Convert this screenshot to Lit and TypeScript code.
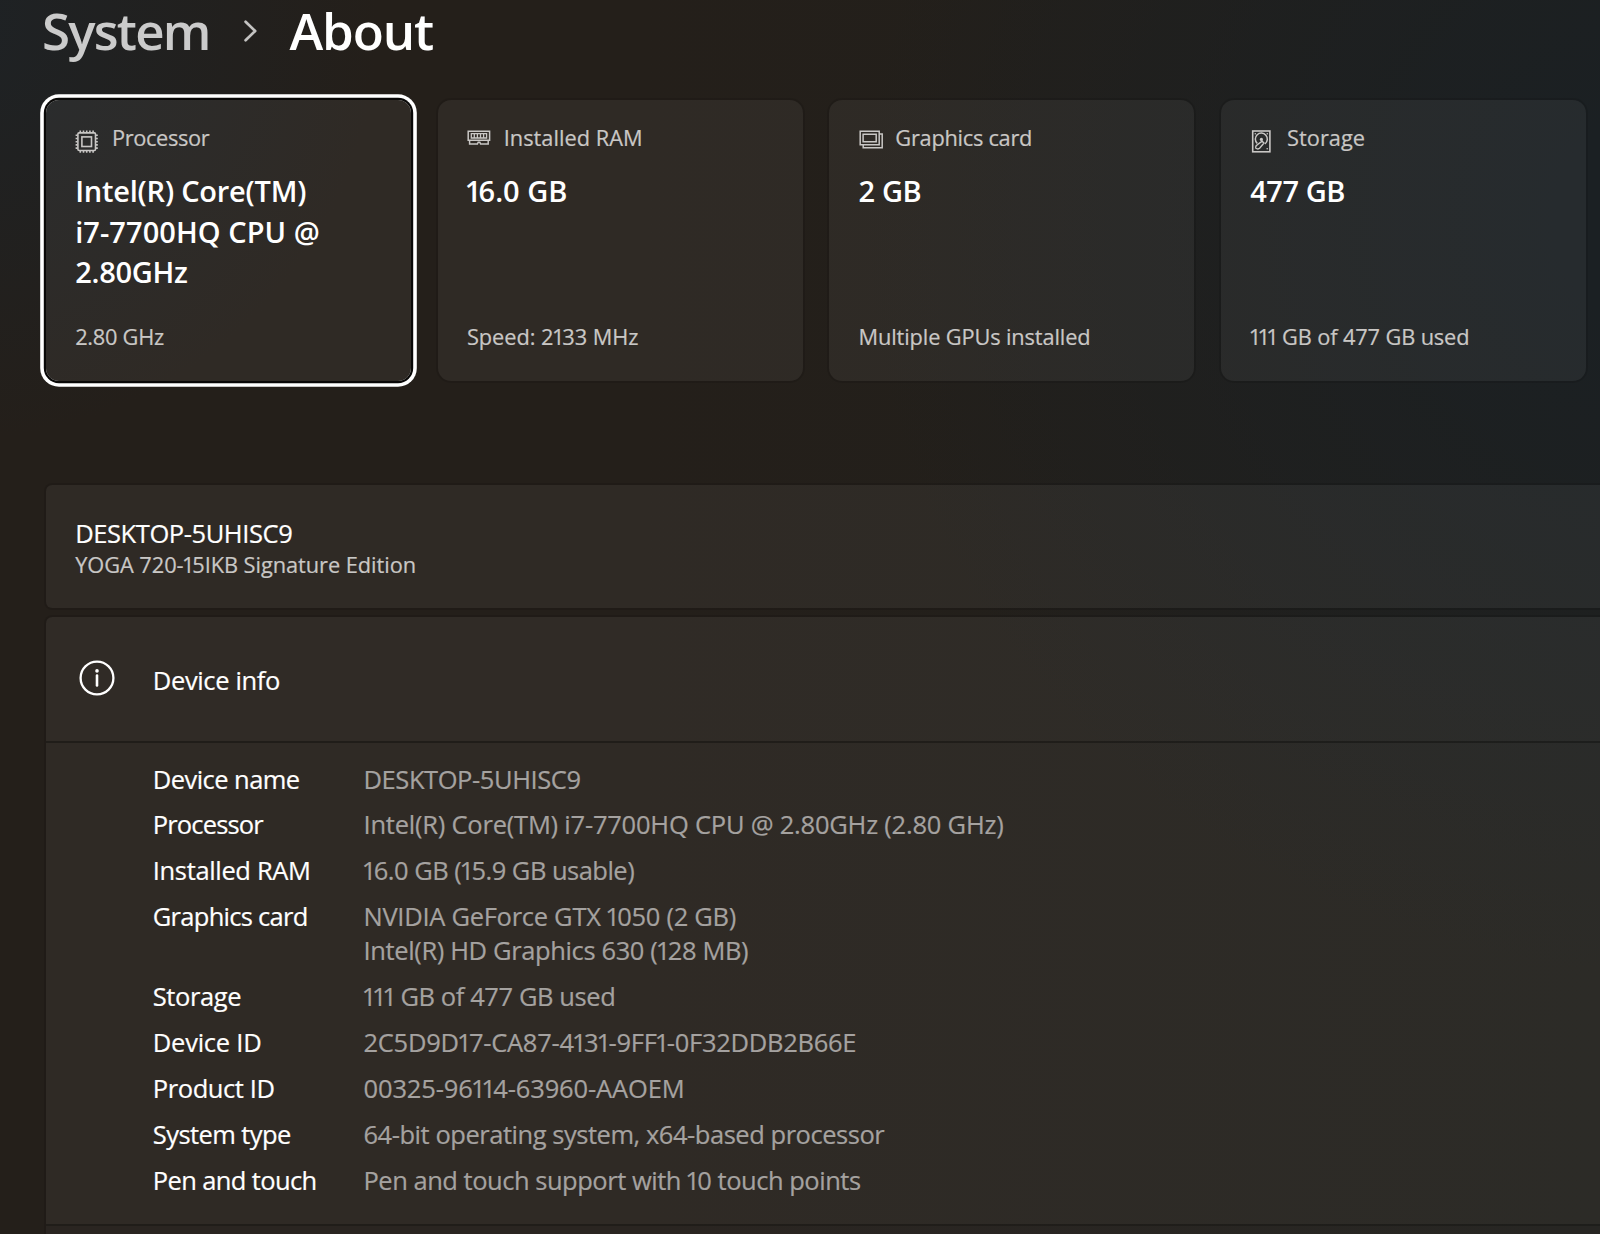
import { LitElement, html, css, svg, type TemplateResult } from "lit";
import { customElement, property } from "lit/decorators.js";
import { classMap } from "lit/directives/class-map.js";

/** A run of text with its own tracking, in px. */
type Run = [text: string, tracking: number];

interface Spec {
  icon: string;
  label: Run;
  value: Run[];
  note: Run;
  focused?: boolean;
}

interface Row {
  label: Run;
  values: Run[];
}

const specs: Spec[] = [
  {
    icon: "cpu",
    label: ["Processor", -0.37],
    value: [
      ["Intel(R) Core(TM)", -0.22],
      ["i7-7700HQ CPU @", 0.06],
      ["2.80GHz", -0.29],
    ],
    note: ["2.80 GHz", -0.28],
    focused: true,
  },
  { icon: "ram", label: ["Installed RAM", 0.02], value: [["16.0 GB", 0]], note: ["Speed: 2133 MHz", -0.05] },
  { icon: "gpu", label: ["Graphics card", -0.28], value: [["2 GB", -0.38]], note: ["Multiple GPUs installed", -0.14] },
  { icon: "disk", label: ["Storage", 0], value: [["477 GB", -0.46]], note: ["111 GB of 477 GB used", -0.14] },
];

const rows: Row[] = [
  { label: ["Device name", -0.55], values: [["DESKTOP-5UHISC9", -0.42]] },
  { label: ["Processor", -0.85], values: [["Intel(R) Core(TM) i7-7700HQ CPU @ 2.80GHz (2.80 GHz)", -0.22]] },
  { label: ["Installed RAM", -0.35], values: [["16.0 GB (15.9 GB usable)", -0.52]] },
  {
    label: ["Graphics card", -0.72],
    values: [
      ["NVIDIA GeForce GTX 1050 (2 GB)", -0.28],
      ["Intel(R) HD Graphics 630 (128 MB)", -0.37],
    ],
  },
  { label: ["Storage", -0.42], values: [["111 GB of 477 GB used", -0.41]] },
  { label: ["Device ID", -0.24], values: [["2C5D9D17-CA87-4131-9FF1-0F32DDB2B66E", -0.27]] },
  { label: ["Product ID", -0.42], values: [["00325-96114-63960-AAOEM", -0.13]] },
  { label: ["System type", -0.58], values: [["64-bit operating system, x64-based processor", -0.46]] },
  { label: ["Pen and touch", -0.62], values: [["Pen and touch support with 10 touch points", -0.48]] },
];

/** Draws a run; the digit one is set narrower than the other figures. */
const run = ([text, tracking]: Run) =>
  html`<span style="letter-spacing:${tracking}px"
    >${text.split(/(1)/).map((part) => (part === "1" ? html`<span class="one">1</span>` : part))}</span
  >`;

const figures = css`
  .one {
    margin-left: -0.07em;
    letter-spacing: -0.1em;
  }
`;

const pins = [5.3, 8.5, 11.7, 14.9, 18.1];

const icons: Record<string, TemplateResult> = {
  cpu: svg`
    <rect x="2.9" y="2.9" width="17.6" height="17.6" rx="1.2" stroke-width="1.6"/>
    <rect x="6.9" y="6.9" width="9.6" height="9.6" stroke-width="1.6"/>
    <path stroke-width="1.6" d="${pins.map((p) => `M${p} .6V2.6M${p} 20.8V22.8M.6 ${p}H2.6M20.8 ${p}H22.8`).join("")}"/>`,
  ram: svg`
    <path stroke-width="1.5" d="M1.2 1.2H22.6V10.2H1.2ZM2.6 10.2V14H10.4L11.2 12.2H12.8L13.6 14H21.2V10.2"/>
    <path stroke-width="1.3" d="M4.3 3.7H19.6V8H4.3ZM7.3 3.7V8M10.4 3.7V8M13.5 3.7V8M16.6 3.7V8"/>`,
  gpu: svg`
    <path stroke-width="1.5" d="M1.2 1.2H20.2V14.8H1.2Z"/>
    <path stroke-width="1.5" d="M4.1 4.2H17.2V11.8H4.1Z"/>
    <path stroke-width="1.5" d="M20.4 4H23.2V17.8H4.2V15"/>`,
  disk: svg`
    <rect x="2.7" y="1" width="17.2" height="20.8" stroke-width="1.6"/>
    <path stroke-width="1.5" d="M7.2 13.4A6 6 0 1 1 15 13.8"/>
    <path stroke-width="1.4" d="M12.2 11.2L14 13L9.6 18.3C8.4 19.4 6.2 18.9 5.7 18C5.4 16.6 6.2 15.3 7.4 14.6Z"/>
    <circle class="dot" cx="11.4" cy="9.4" r="1.6"/>
    <circle class="dot" cx="5.3" cy="3.8" r=".8"/>
    <circle class="dot" cx="17.3" cy="3.8" r=".8"/>
    <circle class="dot" cx="17.2" cy="18.8" r=".8"/>`,
};

@customElement("spec-card")
class SpecCard extends LitElement {
  @property({ attribute: false }) spec!: Spec;

  static styles = [
    figures,
    css`
      :host {
        display: block;
      }
      .card {
        box-sizing: border-box;
        height: 281px;
        padding: 23.7px 20px 28.4px 29.2px;
        border-radius: 13px;
        background: rgba(255, 255, 255, 0.052);
        box-shadow: 0 0 0 2px rgba(0, 0, 0, 0.1);
        display: flex;
        flex-direction: column;
      }
      .focused {
        box-shadow:
          0 0 0 2.2px #090807,
          0 0 0 5.8px #fff;
      }
      .head {
        display: flex;
        gap: 12.8px;
        height: 30px;
        color: #c9c7c5;
      }
      .icon {
        flex: none;
        width: 24px;
        height: 24px;
        margin-top: 6.6px;
        fill: none;
        stroke: currentColor;
        overflow: visible;
      }
      .dot {
        fill: currentColor;
        stroke: none;
      }
      .small {
        font-size: 21.8px;
        line-height: 30px;
        color: #c9c7c5;
        white-space: nowrap;
        -webkit-text-stroke: 0.2px currentColor;
      }
      .value {
        margin-top: 17.9px;
        font-size: 29px;
        font-weight: 600;
        line-height: 40.7px;
        color: #fff;
        white-space: nowrap;
        flex: 1;
      }
    `,
  ];

  render() {
    const s = this.spec;
    return html`<section class=${classMap({ card: true, focused: !!s.focused })}>
      <div class="head">
        <svg class="icon" viewBox="0 0 24 24">${icons[s.icon]}</svg>
        <div class="small">${run(s.label)}</div>
      </div>
      <div class="value">${s.value.map((v) => html`<div>${run(v)}</div>`)}</div>
      <div class="small">${run(s.note)}</div>
    </section>`;
  }
}

@customElement("app-root")
class AppRoot extends LitElement {
  static styles = [
    figures,
    css`
      :host {
        display: flow-root;
        box-sizing: border-box;
        height: 1234px;
        overflow: hidden;
        padding-left: 46px;
        font-family: "Open Sans", "Noto Sans", sans-serif;
        color: #fff;
        background:
          radial-gradient(ellipse 420px 420px at -40px 20px, #1e2225, rgba(30, 34, 37, 0)),
          radial-gradient(ellipse 820px 760px at 1680px 220px, #1b2023 15%, rgba(27, 32, 35, 0)),
          linear-gradient(90deg, #241f1a 0, #241f1a 40%, #21201c 100%);
      }
      .crumbs {
        display: flex;
        height: 60px;
        font-size: 51px;
        font-weight: 600;
        line-height: 60px;
        margin-left: -4px;
      }
      .parent {
        width: 202px;
        color: #cbcbcb;
        letter-spacing: -1.8px;
      }
      .current {
        letter-spacing: -1.12px;
        margin-left: 32.5px;
      }
      .chevron {
        width: 13px;
        height: 22px;
        margin-top: 20px;
        fill: none;
        stroke: #c4c3c2;
        stroke-width: 2.7;
        stroke-linecap: round;
        stroke-linejoin: round;
      }
      .cards {
        display: grid;
        grid-template-columns: repeat(4, 365px);
        gap: 26.7px;
        margin-top: 39.5px;
      }
      .panel {
        background: rgba(255, 255, 255, 0.052);
        box-shadow: 0 0 0 2px rgba(0, 0, 0, 0.1);
        border-radius: 6px 0 0 6px;
      }
      .machine {
        box-sizing: border-box;
        height: 123px;
        margin-top: 104.5px;
        padding: 31.1px 29.2px;
      }
      .body {
        font-size: 25.5px;
        line-height: 34px;
        white-space: nowrap;
        -webkit-text-stroke: 0.2px currentColor;
      }
      .sub {
        font-size: 21.8px;
        line-height: 30px;
        color: #c9c7c5;
      }
      .info {
        margin-top: 9px;
        border-radius: 6px 0 0 0;
      }
      .head {
        box-sizing: border-box;
        height: 124px;
        display: flex;
        align-items: center;
        padding: 0 0 0 32.8px;
        border-radius: 6px 0 0 0;
        background: rgba(255, 255, 255, 0.008);
      }
      .glyph {
        width: 36px;
        height: 36px;
        margin: 0 38px 3px 0;
        fill: none;
        stroke: #fff;
      }
      .title {
        padding-top: 2px;
      }
      .rule {
        height: 2px;
        background: rgba(0, 0, 0, 0.3);
      }
      .rows {
        box-sizing: border-box;
        height: 481px;
        margin: 0;
        padding: 18.6px 0 0 106.8px;
        display: grid;
        align-content: start;
        grid-template-columns: 210.7px 1fr;
        row-gap: 11.7px;
        line-height: 34.2px;
      }
      .rows dd {
        margin: 0;
        color: #a5a2a0;
      }
      .next {
        height: 20px;
        background: rgba(0, 0, 0, 0.1);
      }
    `,
  ];

  render() {
    return html`
      <header class="crumbs">
        <span class="parent">System</span>
        <svg class="chevron" viewBox="0 0 13 22"><path d="M1.6 1.8L11.2 11L1.6 20.2" /></svg>
        <span class="current">About</span>
      </header>
      <div class="cards">${specs.map((s) => html`<spec-card .spec=${s}></spec-card>`)}</div>
      <section class="panel machine body">
        <div>${run(["DESKTOP-5UHISC9", -0.42])}</div>
        <div class="sub">${run(["YOGA 720-15IKB Signature Edition", -0.06])}</div>
      </section>
      <section class="panel info body">
        <div class="head">
          <svg class="glyph" viewBox="0 0 36 36">
            <circle cx="18" cy="18" r="16.4" stroke-width="2.3" />
            <path d="M18 15.6V25.4" stroke-width="2.6" stroke-linecap="round" />
            <circle cx="18" cy="10.9" r="1.8" fill="#fff" stroke="none" />
          </svg>
          <div class="title">${run(["Device info", -0.36])}</div>
        </div>
        <div class="rule"></div>
        <dl class="rows">
          ${rows.map(
            (r) => html`<dt>${run(r.label)}</dt>
              <dd>${r.values.map((v) => html`<div>${run(v)}</div>`)}</dd>`,
          )}
        </dl>
        <div class="rule"></div>
        <div class="next"></div>
      </section>
    `;
  }
}
